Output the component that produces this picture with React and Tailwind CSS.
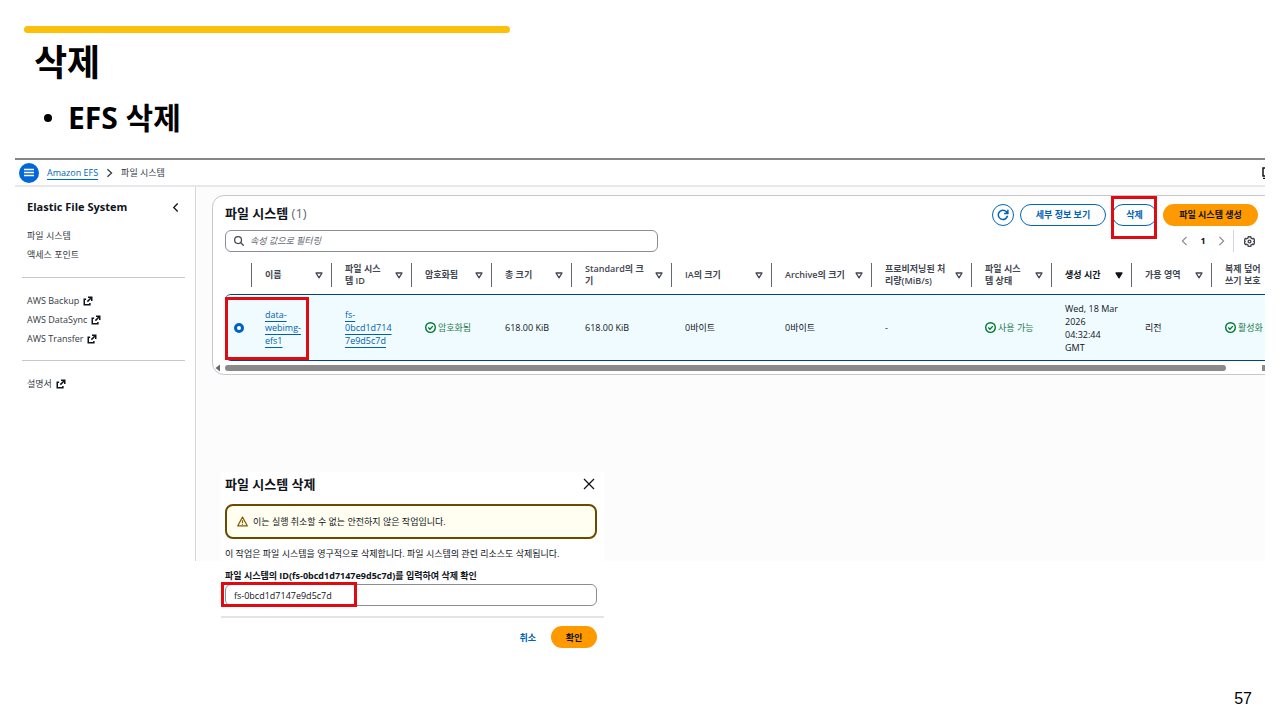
const columns = [
  { lines: ["이름"] },
  { lines: ["파일 시스", "템 ID"] },
  { lines: ["암호화됨"] },
  { lines: ["총 크기"] },
  { lines: ["Standard의 크", "기"] },
  { lines: ["IA의 크기"] },
  { lines: ["Archive의 크기"] },
  { lines: ["프로비저닝된 처", "리량(MiB/s)"] },
  { lines: ["파일 시스", "템 상태"] },
  { lines: ["생성 시간"], sorted: true },
  { lines: ["가용 영역"] },
  { lines: ["복제 덮어", "쓰기 보호"] },
];

const Lines = ({ items }) =>
  items.map((line) => (
    <span key={line} className="block">
      {line}
    </span>
  ));

const SortIcon = ({ filled }) => (
  <svg viewBox="0 0 8 7" className="h-[7px] w-2 shrink-0" aria-hidden="true">
    <path
      d="M1 1h6L4 5.8z"
      fill={filled ? "#0f141a" : "none"}
      stroke={filled ? "#0f141a" : "#424650"}
      strokeWidth="1.3"
      strokeLinejoin="round"
    />
  </svg>
);

const ExternalIcon = () => (
  <svg viewBox="0 0 16 16" className="size-[10px] shrink-0" fill="none" stroke="#0f141a" strokeWidth="2.4" aria-hidden="true">
    <path d="M8 2h6v6M14 2 7 9M5 5H2v9h9v-3" />
  </svg>
);

const CheckIcon = () => (
  <svg viewBox="0 0 16 16" className="size-[11px] shrink-0" fill="none" stroke="#007a2c" strokeWidth="2" aria-hidden="true">
    <circle cx="8" cy="8" r="7" />
    <path d="m4.8 8 2.4 2.4L11.4 6" />
  </svg>
);

const Chevron = ({ d, className }) => (
  <svg viewBox="0 0 8 12" className={className} fill="none" stroke="currentColor" strokeWidth="1.5" aria-hidden="true">
    <path d={d} />
  </svg>
);

const Status = ({ children }) => (
  <span className="flex items-center gap-[2px] whitespace-nowrap text-[#1f7a48]">
    <CheckIcon />
    {children}
  </span>
);

// Red highlight frame drawn over a control
const Highlight = ({ className }) => (
  <span className={`pointer-events-none absolute border-[3px] border-[#e10a10] ${className}`} aria-hidden="true" />
);

const NavLink = ({ children, external }) => (
  <li>
    <a href="#" className="flex h-[19px] items-center gap-1">
      {children}
      {external && <ExternalIcon />}
    </a>
  </li>
);

const Sidebar = () => (
  <nav className="w-[181px] shrink-0 border-r border-[#d5d5da] bg-white pt-3 pr-[10px] pl-[7px] text-[9px] text-[#333843]">
    <div className="flex h-[17px] items-center justify-between pr-[6px] pl-[5px]">
      <h3 className="text-[11px] font-bold text-[#0f141a]">Elastic File System</h3>
      <button type="button" aria-label="탐색 닫기" className="text-[#0f141a]">
        <Chevron d="M6.5 1.5 2 6l4.500 4.500" className="h-[11px] w-[7px]" />
      </button>
    </div>
    <ul className="mt-[10px] pl-[5px]">
      <NavLink>파일 시스템</NavLink>
      <NavLink>액세스 포인트</NavLink>
    </ul>
    <hr className="mt-[13px] border-[#c6c6cd]" />
    <ul className="mt-[13px] pl-[5px]">
      <NavLink external>AWS Backup</NavLink>
      <NavLink external>AWS DataSync</NavLink>
      <NavLink external>AWS Transfer</NavLink>
    </ul>
    <hr className="mt-3 border-[#c6c6cd]" />
    <ul className="mt-[13px] pl-[5px]">
      <NavLink external>설명서</NavLink>
    </ul>
  </nav>
);

const FileSystemTable = () => (
  <table className="w-[1226px] table-fixed border-separate border-spacing-0 text-left text-[9px]">
    <colgroup>
      <col className="w-[26px]" />
      <col className="w-[80px]" />
      <col className="w-[80px]" />
      <col className="w-[80px]" />
      <col className="w-[80px]" />
      <col className="w-[100px]" />
      <col className="w-[100px]" />
      <col className="w-[100px]" />
      <col className="w-[100px]" />
      <col className="w-[80px]" />
      <col className="w-[80px]" />
      <col className="w-[80px]" />
      <col className="w-[240px]" />
    </colgroup>
    <thead>
      <tr className="h-[38px]">
        <th aria-label="선택" />
        {columns.map((col) => (
          <th key={col.lines.join("")} className="p-0">
            <div className="flex h-6 items-center justify-between border-l border-[#656871] pr-2 pl-[13px] leading-[12px] whitespace-nowrap">
              <span className={col.sorted ? "font-bold text-[#0f141a]" : "font-semibold text-[#424650]"}>
                <Lines items={col.lines} />
              </span>
              <SortIcon filled={col.sorted} />
            </div>
          </th>
        ))}
      </tr>
    </thead>
    <tbody>
      <tr className="h-[67px] leading-[13px] text-[#0f141a] [&>td]:border-y [&>td]:border-[#00457c] [&>td]:bg-[#f0fbff] [&>td]:py-0 [&>td]:pr-0 [&>td]:pl-[14px]">
        <td className="relative rounded-l-md">
          <input
            type="radio"
            name="fs"
            defaultChecked
            aria-label="data-webimg-efs1"
            className="-ml-[5px] block size-[10px] appearance-none rounded-full border-[3px] border-[#0062c4] bg-white"
          />
          <Highlight className="top-[2px] left-0 h-[63px] w-[84px]" />
        </td>
        <td>
          <a href="#" className="text-[#0060b0] underline underline-offset-3">
            <Lines items={["data-", "webimg-", "efs1"]} />
          </a>
        </td>
        <td>
          <a href="#" className="text-[#0060b0] underline underline-offset-3">
            <Lines items={["fs-", "0bcd1d714", "7e9d5c7d"]} />
          </a>
        </td>
        <td>
          <Status>암호화됨</Status>
        </td>
        <td>618.00 KiB</td>
        <td>618.00 KiB</td>
        <td>0바이트</td>
        <td>0바이트</td>
        <td>-</td>
        <td>
          <Status>사용 가능</Status>
        </td>
        <td>
          <Lines items={["Wed, 18 Mar", "2026", "04:32:44", "GMT"]} />
        </td>
        <td>리전</td>
        <td>
          <Status>활성화</Status>
        </td>
      </tr>
    </tbody>
  </table>
);

const FileSystemCard = () => (
  <section className="mt-2 -mr-4 ml-4 overflow-hidden rounded-xl border border-[#c6c6cd] bg-white pt-2 pl-3">
    <div className="flex items-start justify-between pr-[22px]">
      <h2 className="text-[13px] leading-[18px] font-bold text-[#0f141a]">
        파일 시스템 <span className="font-normal text-[#656871]">(1)</span>
      </h2>
      <div className="flex h-[22px] gap-[6px] text-[9px] font-bold text-[#0062b4]">
        <button type="button" aria-label="새로 고침" className="flex w-[22px] items-center justify-center rounded-full border border-[#0067b8]">
          <svg viewBox="0 0 16 16" className="size-3" fill="none" stroke="currentColor" strokeWidth="2" aria-hidden="true">
            <path d="M14 9a6.200 6.200 0 1 1-1.500-5.300L14 5.500M14.500 1v5H9.500" />
          </svg>
        </button>
        <button type="button" className="w-[86px] rounded-full border border-[#0067b8]">
          세부 정보 보기
        </button>
        <div className="relative">
          <button type="button" className="h-full w-[45px] rounded-full border border-[#0067b8]">
            삭제
          </button>
          <Highlight className="-top-2 -left-px h-[43px] w-[46px]" />
        </div>
        <button type="button" className="w-[95px] rounded-full bg-[#ff9900] text-[#0f141a]">
          파일 시스템 생성
        </button>
      </div>
    </div>
    <div className="mt-1 flex items-center justify-between pr-[25px]">
      <label className="flex h-[22px] w-[433px] items-center gap-[6px] rounded-md border border-[#8c8c94] px-2">
        <svg viewBox="0 0 16 16" className="size-[10px] shrink-0" fill="none" stroke="#424650" strokeWidth="2" aria-hidden="true">
          <circle cx="6.500" cy="6.500" r="5.500" />
          <path d="m10.500 10.500 5 5" />
        </svg>
        <input
          type="text"
          aria-label="속성 값으로 필터링"
          placeholder="속성 값으로 필터링"
          className="w-full text-[9px] outline-none placeholder:text-[#656871] placeholder:italic"
        />
      </label>
      <div className="flex h-[22px] items-center text-[9px] font-bold text-[#0f141a]">
        <button type="button" aria-label="이전 페이지" className="text-[#8c8c94]">
          <Chevron d="M6.500 1 1.500 6l5 5" className="h-[10px] w-[7px]" />
        </button>
        <button type="button" className="w-[30px]">1</button>
        <button type="button" aria-label="다음 페이지" className="text-[#8c8c94]">
          <Chevron d="m1.500 1 5 5-5 5" className="h-[10px] w-[7px]" />
        </button>
        <span className="mr-[10px] ml-2 h-[22px] w-px bg-[#d5d5da]" />
        <button type="button" aria-label="기본 설정">
          <svg viewBox="0 0 16 16" className="size-[11px]" fill="none" stroke="#424650" strokeWidth="2" strokeLinejoin="round" aria-hidden="true">
            <path d="M6.200 1h3.600l.5 2 1.700 1 2-.6 1.600 3L14.200 8l1.400 1.600-1.600 3-2-.6-1.700 1-.5 2H6.200l-.5-2L4 12l-2 .6-1.600-3L1.800 8 .4 6.400l1.600-3L4 4l1.700-1z" />
            <circle cx="8" cy="8" r="2" />
          </svg>
        </button>
      </div>
    </div>
    <div className="mt-1">
      <FileSystemTable />
    </div>
    <div className="-ml-[10px] flex h-[13px] items-center">
      <svg viewBox="0 0 6 8" className="mr-1 h-2 w-[6px] shrink-0" fill="#656871" aria-hidden="true">
        <path d="M5 .5v7L.5 4z" />
      </svg>
      <span className="h-[6px] flex-1 rounded-full bg-[#8a8a8a]" />
      <span className="mr-3 ml-9 h-[6px] w-[6px] bg-[#8a8a8a]" />
    </div>
  </section>
);

const DeleteDialog = () => (
  <div
    role="dialog"
    aria-labelledby="delete-title"
    className="absolute top-[312px] left-[206px] w-[383px] bg-white pt-[3px] text-[9px] leading-[13px] text-[#0f141a]"
  >
    <div className="pr-[7px] pl-1">
      <div className="flex h-[18px] items-center justify-between">
        <h2 id="delete-title" className="text-[13px] font-bold">
          파일 시스템 삭제
        </h2>
        <button type="button" aria-label="닫기" className="mr-[2px]">
          <svg viewBox="0 0 12 12" className="size-3" fill="none" stroke="#0f141a" strokeWidth="1.300" aria-hidden="true">
            <path d="m1 1 10 10M11 1 1 11" />
          </svg>
        </button>
      </div>
      <div className="mt-[11px] flex h-[35px] items-center gap-[5px] rounded-lg border-2 border-[#6b4a00] bg-[#fffef0] px-[10px]">
        <svg viewBox="0 0 16 16" className="size-[11px] shrink-0" fill="none" stroke="#855900" strokeWidth="1.800" strokeLinejoin="round" aria-hidden="true">
          <path d="M8 1.500 15 14.500H1zM8 6v4M8 11.200v1.600" />
        </svg>
        이는 실행 취소할 수 없는 안전하지 않은 작업입니다.
      </div>
      <p className="mt-2">이 작업은 파일 시스템을 영구적으로 삭제합니다. 파일 시스템의 관련 리소스도 삭제됩니다.</p>
      <label htmlFor="confirm-id" className="mt-[9px] block font-bold">
        파일 시스템의 ID(fs-0bcd1d7147e9d5c7d)를 입력하여 삭제 확인
      </label>
      <div className="relative mt-[2px]">
        <input
          id="confirm-id"
          type="text"
          defaultValue="fs-0bcd1d7147e9d5c7d"
          className="block h-[22px] w-full rounded-md border border-[#8c8c94] px-2 outline-none"
        />
        <Highlight className="-top-[2px] -left-1 h-[25px] w-[136px]" />
      </div>
    </div>
    <div className="mt-[10px] flex items-center justify-end gap-[15px] border-t-2 border-[#e4e4e8] pt-2 pr-[7px] font-bold">
      <button type="button" className="text-[#0062b4]">취소</button>
      <button type="button" className="h-[22px] w-[46px] rounded-full bg-[#ff9900]">확인</button>
    </div>
  </div>
);

const Console = () => (
  <div className="relative mx-[15px] mt-[19px] border-t-2 border-[#85858a]">
    <div className="overflow-hidden">
      <header className="flex h-[27px] items-center border-b-2 border-[#e8e8ec] pl-1 text-[9px] text-[#333843]">
        <button type="button" aria-label="메뉴" className="flex size-5 items-center justify-center rounded-full bg-[#0067d8]">
          <svg viewBox="0 0 10 10" className="size-[10px]" stroke="white" strokeWidth="1.300" aria-hidden="true">
            <path d="M0 1.500h10M0 4.500h10M0 7.500h10" />
          </svg>
        </button>
        <a href="#" className="ml-2 text-[#0067b8] underline underline-offset-3">Amazon EFS</a>
        <Chevron d="m1.500 1.500 5 4.500-5 4.500" className="mx-2 h-[10px] w-[7px]" />
        <span>파일 시스템</span>
        <svg viewBox="0 0 12 12" className="-mr-[9px] ml-auto size-3 shrink-0" fill="none" stroke="#0f141a" strokeWidth="1.500" aria-hidden="true">
          <path d="M1 1h10v8H1zM1 11.500h10" />
        </svg>
      </header>
      <div className="flex">
        <Sidebar />
        <main className="h-[374px] min-w-0 flex-1 bg-[#fcfcfd]">
          <FileSystemCard />
        </main>
      </div>
    </div>
    <DeleteDialog />
  </div>
);

export default function App() {
  return (
    <div className="flex min-h-screen flex-col bg-white font-['Open_Sans','Noto_Sans_CJK_KR',sans-serif]">
      <div className="mt-[26px] ml-6 h-[7px] w-[486px] rounded-sm bg-[#fdc00a]" />
      <h1 className="mt-2 ml-[34px] text-[36px] leading-[44px] font-bold text-black">삭제</h1>
      <ul className="mt-3 ml-11 text-[30px] leading-[42px] font-bold text-black">
        <li className="flex items-center gap-4">
          <span className="size-2 rounded-full bg-black" />
          EFS 삭제
        </li>
      </ul>
      <Console />
      <footer className="mt-auto pr-7 pb-3 text-right font-['Liberation_Sans',sans-serif] text-[16px] leading-[18px] text-black">
        57
      </footer>
    </div>
  );
}
